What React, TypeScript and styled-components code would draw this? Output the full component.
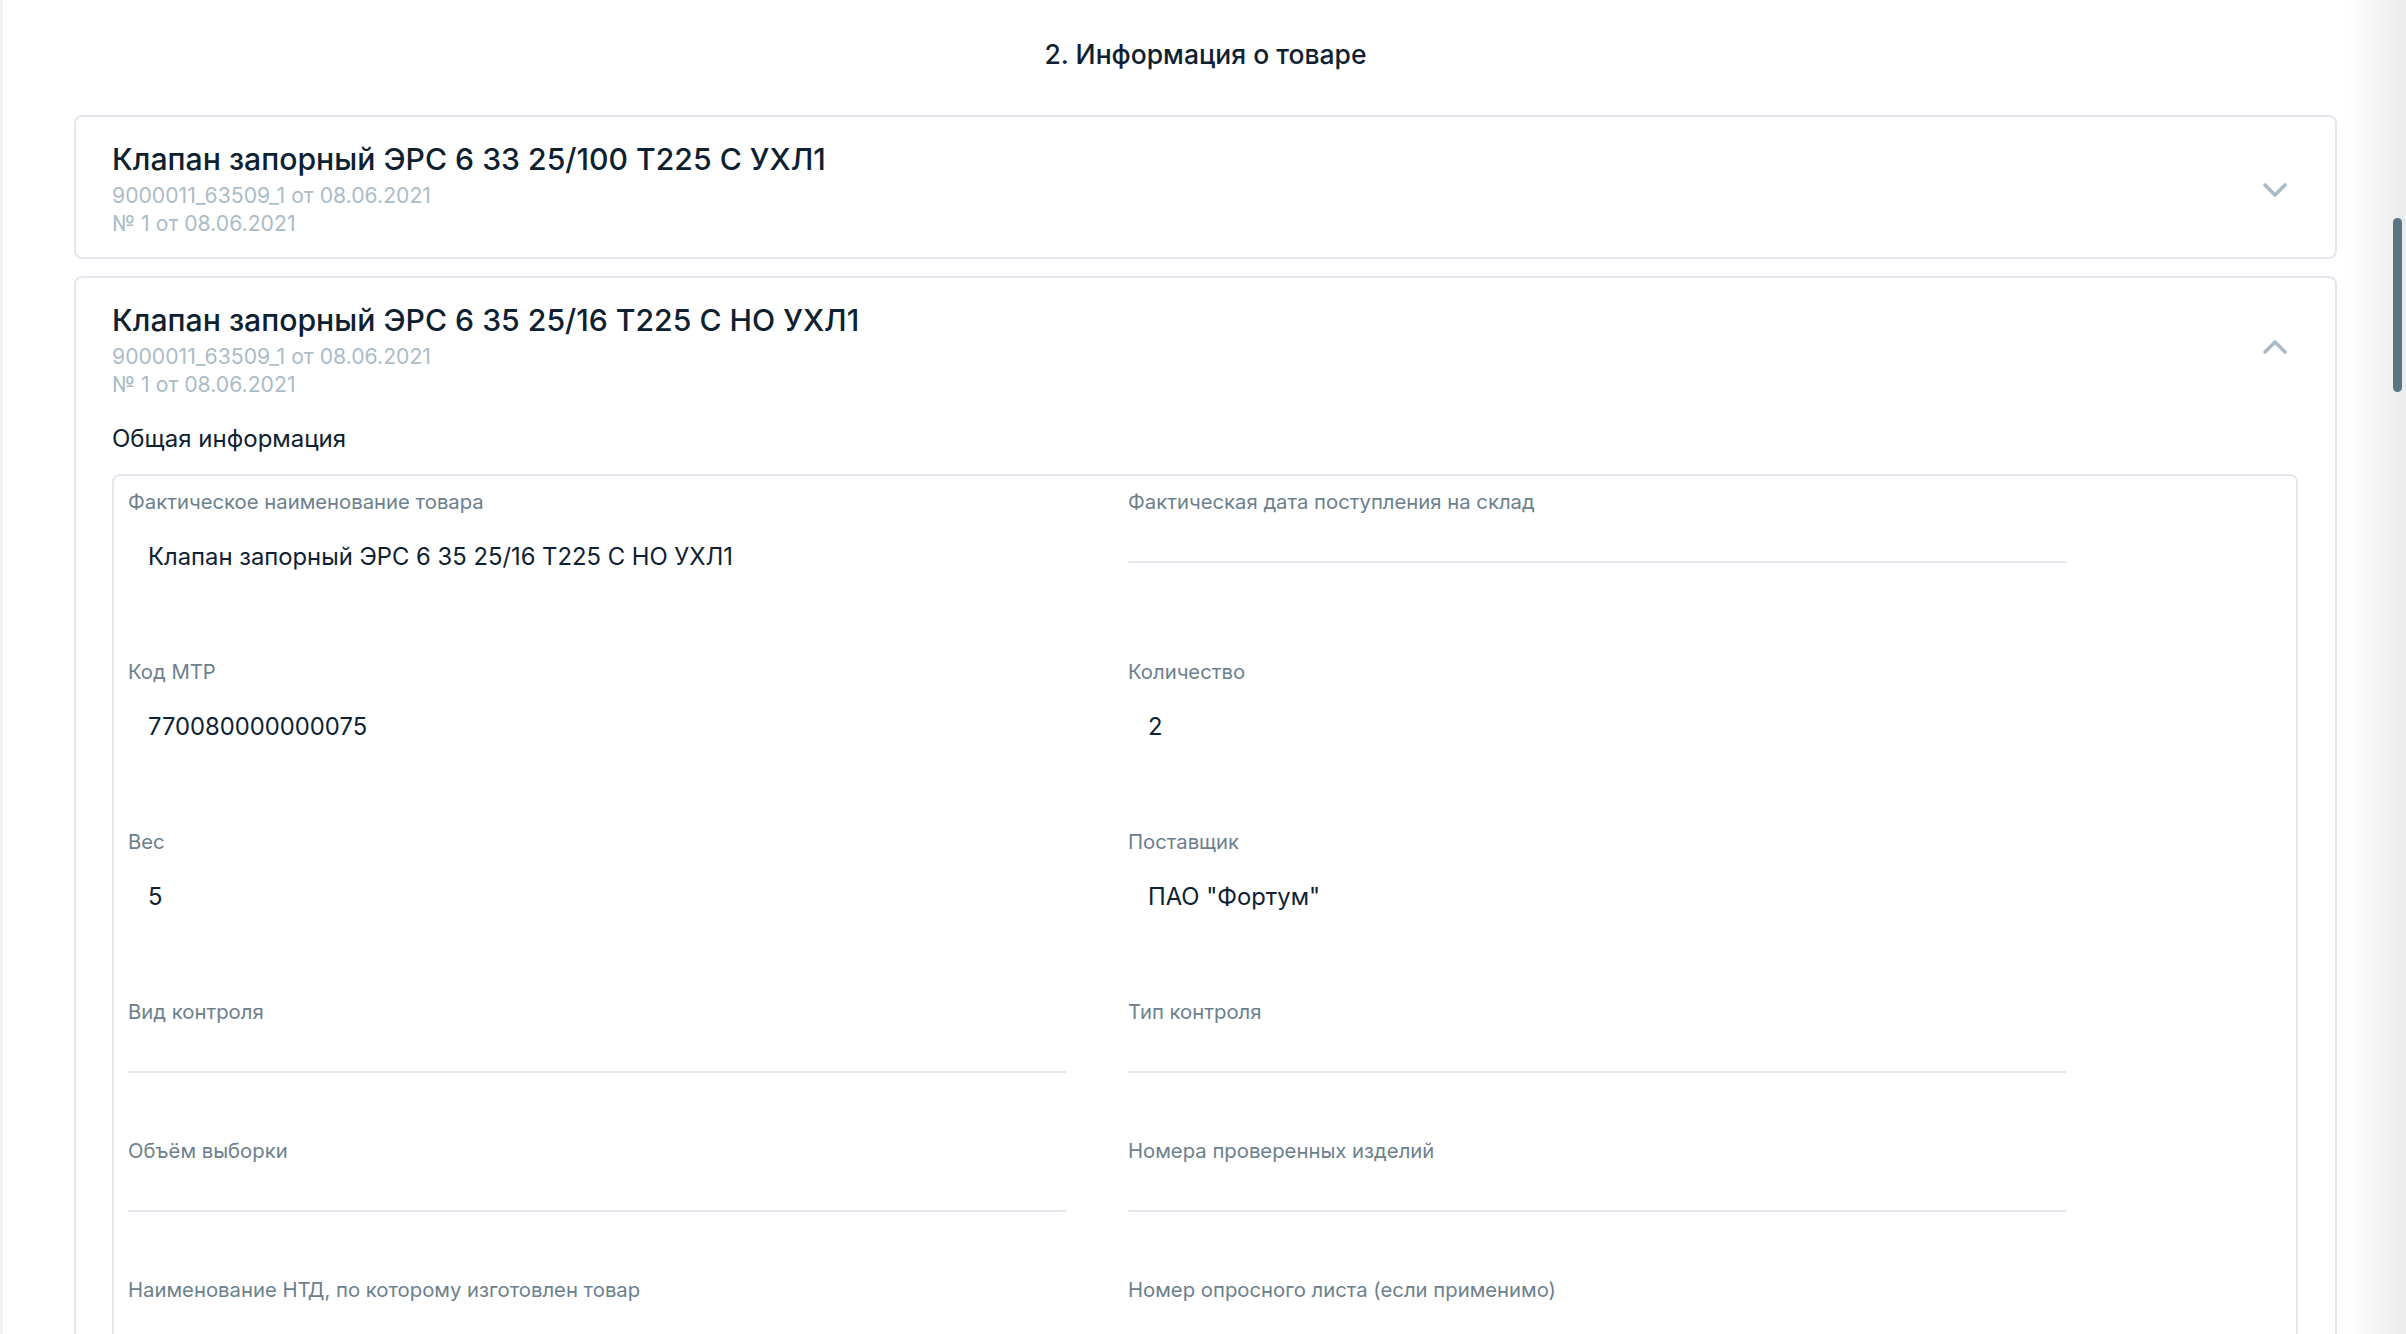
import React from "react";
import styled, { createGlobalStyle } from "styled-components";

const GlobalStyle = createGlobalStyle`
  html, body { margin: 0; padding: 0; height: 100%; overflow: hidden; background: #ffffff; }
  body { font-family: Inter, "Noto Sans", "Liberation Sans", sans-serif; color: #0e2233; }
  * { box-sizing: border-box; }
`;

const Page = styled.div`
  display: flex;
  height: 100vh;
  overflow: hidden;
`;

const Main = styled.main`
  flex: 1;
  min-width: 0;
  border-left: 3px solid #f2f4f6;
  padding: 37px 9px 0 71px;
  display: flex;
  flex-direction: column;
`;

const PageTitle = styled.h2`
  margin: 0 0 44px;
  font-size: 26.5px;
  line-height: 34px;
  font-weight: 500;
  text-align: center;
  color: #0d2131;
`;

const CardList = styled.div`
  display: flex;
  flex-direction: column;
  gap: 17px;
`;

const Card = styled.section`
  border: 2px solid #e4e8ee;
  border-radius: 8px;
  background: #fff;
`;

const CardHeader = styled.div`
  display: flex;
  align-items: center;
  justify-content: space-between;
  padding: 22px 47px 20px 36px;
`;

const HeaderText = styled.div`
  display: flex;
  flex-direction: column;
`;

const CardTitle = styled.div`
  font-size: 30.2px;
  line-height: 40px;
  font-weight: 500;
  color: #0d2131;
  margin-bottom: 2px;
`;

const SubLine = styled.div`
  font-size: 21.2px;
  line-height: 28px;
  color: #abbcc7;
`;

const Chevron = styled.svg<{ $up?: boolean }>`
  margin-top: ${(p) => (p.$up ? "-5px" : "4px")};
  flex: none;
`;

const CardBody = styled.div`
  padding: 5px 37px 40px 36px;
`;

const SectionLabel = styled.div`
  font-size: 24px;
  line-height: 32px;
  color: #0d2131;
  margin-bottom: 19px;
`;

const FieldsBox = styled.div`
  border: 2px solid #e4e8ee;
  border-radius: 8px;
  padding: 12px 0 40px 14px;
  display: grid;
  grid-template-columns: 938px 938px;
  column-gap: 62px;
  row-gap: 64px;
  align-items: start;
`;

const Field = styled.div`
  display: flex;
  flex-direction: column;
`;

const Label = styled.div`
  font-size: 20.3px;
  line-height: 28px;
  color: #6c808d;
`;

const InputLine = styled.div`
  height: 47px;
  border-bottom: 2px solid #e4e8ee;
`;

const ValueText = styled.div`
  padding: 25px 0 21px 20px;
  font-size: 23.8px;
  line-height: 32px;
  color: #0e2233;
`;

const Gutter = styled.aside`
  position: relative;
  flex: none;
  width: 60px;
  background: linear-gradient(to right, #ffffff 0%, #f6f6f6 45%, #ebebeb 100%);
`;

const Thumb = styled.div`
  position: absolute;
  left: 47px;
  top: 218px;
  width: 9px;
  height: 174px;
  border-radius: 5px;
  background: #5b7481;
`;

type FieldData = { label: string; value?: string };

const rows: FieldData[][] = [
  [
    { label: "Фактическое наименование товара", value: "Клапан запорный ЭРС 6 35 25/16 Т225 С НО УХЛ1" },
    { label: "Фактическая дата поступления на склад" },
  ],
  [
    { label: "Код МТР", value: "770080000000075" },
    { label: "Количество", value: "2" },
  ],
  [
    { label: "Вес", value: "5" },
    { label: "Поставщик", value: 'ПАО "Фортум"' },
  ],
  [{ label: "Вид контроля" }, { label: "Тип контроля" }],
  [{ label: "Объём выборки" }, { label: "Номера проверенных изделий" }],
  [
    { label: "Наименование НТД, по которому изготовлен товар" },
    { label: "Номер опросного листа (если применимо)" },
  ],
];

const ChevronIcon: React.FC<{ up?: boolean }> = ({ up }) => (
  <Chevron $up={up} width="26" height="16" viewBox="0 0 26 16" fill="none">
    <polyline
      points={up ? "3,13 13,3 23,13" : "3,3 13,13 23,3"}
      stroke="#a8bbc7"
      strokeWidth="3.6"
      strokeLinecap="round"
      strokeLinejoin="round"
    />
  </Chevron>
);

const ItemHeader: React.FC<{ title: string; up?: boolean }> = ({ title, up }) => (
  <CardHeader>
    <HeaderText>
      <CardTitle>{title}</CardTitle>
      <SubLine>9000011_63509_1 от 08.06.2021</SubLine>
      <SubLine>№ 1 от 08.06.2021</SubLine>
    </HeaderText>
    <ChevronIcon up={up} />
  </CardHeader>
);

export default function App() {
  return (
    <>
      <GlobalStyle />
      <Page>
        <Main>
          <PageTitle>2. Информация о товаре</PageTitle>
          <CardList>
            <Card>
              <ItemHeader title="Клапан запорный ЭРС 6 33 25/100 Т225 С УХЛ1" />
            </Card>
            <Card>
              <ItemHeader title="Клапан запорный ЭРС 6 35 25/16 Т225 С НО УХЛ1" up />
              <CardBody>
                <SectionLabel>Общая информация</SectionLabel>
                <FieldsBox>
                  {rows.flat().map((f, i) => (
                    <Field key={i}>
                      <Label>{f.label}</Label>
                      {f.value ? <ValueText>{f.value}</ValueText> : <InputLine />}
                    </Field>
                  ))}
                </FieldsBox>
              </CardBody>
            </Card>
          </CardList>
        </Main>
        <Gutter>
          <Thumb />
        </Gutter>
      </Page>
    </>
  );
}
